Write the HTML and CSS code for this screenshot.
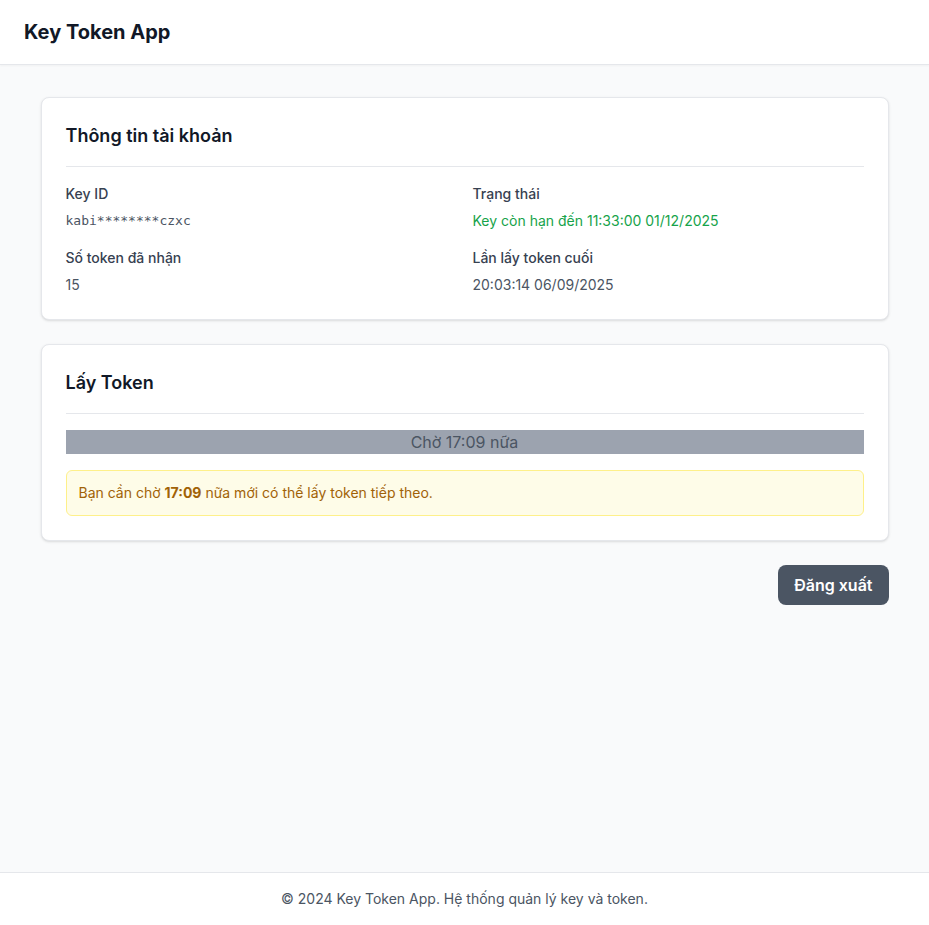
FILE: index.html
```html
<!DOCTYPE html>
<html lang="vi">
<head>
<meta charset="utf-8">
<title>Key Token App</title>
<link rel="stylesheet" href="styles.css">
</head>
<body>
<div class="page">
  <header class="header">
    <h1 class="brand">Key Token App</h1>
  </header>
  <main class="main">
    <div class="container">
      <section class="card">
        <h2 class="card-title">Thông tin tài khoản</h2>
        <div class="info-grid">
          <div class="field">
            <div class="label">Key ID</div>
            <div class="value mono">kabi********czxc</div>
          </div>
          <div class="field">
            <div class="label">Trạng thái</div>
            <div class="value green">Key còn hạn đến 11:33:00 01/12/2025</div>
          </div>
          <div class="field">
            <div class="label">Số token đã nhận</div>
            <div class="value">15</div>
          </div>
          <div class="field">
            <div class="label">Lần lấy token cuối</div>
            <div class="value">20:03:14 06/09/2025</div>
          </div>
        </div>
      </section>
      <section class="card">
        <h2 class="card-title">Lấy Token</h2>
        <div class="card-body">
          <div class="wait-bar">Chờ 17:09 nữa</div>
          <div class="alert">Bạn cần chờ <strong>17:09</strong> nữa mới có thể lấy token tiếp theo.</div>
        </div>
      </section>
      <div class="actions">
        <button class="btn-logout" type="button">Đăng xuất</button>
      </div>
    </div>
  </main>
  <footer class="footer">© 2024 Key Token App. Hệ thống quản lý key và token.</footer>
</div>
</body>
</html>
```
FILE: styles.css
```css
* { box-sizing: border-box; }
html, body { margin: 0; padding: 0; }
body {
  font-family: Inter, "Noto Sans", "Liberation Sans", sans-serif;
  background: #f9fafb;
  color: #111827;
}
.page {
  min-height: 100vh;
  display: flex;
  flex-direction: column;
}
.header {
  background: #fff;
  border-bottom: 1px solid #e5e7eb;
  box-shadow: 0 1px 2px rgba(0,0,0,0.04);
  padding: 18px 24px;
}
.brand {
  margin: 0;
  font-size: 20px;
  line-height: 28px;
  font-weight: 700;
  color: #111827;
}
.main {
  flex: 1;
  padding: 32px 0;
}
.container {
  max-width: 896px;
  margin: 0 auto;
  padding: 0 24px;
}
.card {
  background: #fff;
  border: 1px solid #e5e7eb;
  border-radius: 8px;
  box-shadow: 0 1px 3px rgba(0,0,0,0.1), 0 1px 2px -1px rgba(0,0,0,0.1);
  padding: 24px;
  margin-bottom: 24px;
}
.card-title {
  margin: 0;
  font-size: 18px;
  line-height: 28px;
  font-weight: 600;
  color: #111827;
  padding-bottom: 16px;
  border-bottom: 1px solid #e5e7eb;
}
.info-grid {
  margin-top: 17px;
  display: grid;
  grid-template-columns: 1fr 1fr;
  gap: 17px 16px;
}
.label {
  font-size: 14px;
  line-height: 20px;
  font-weight: 500;
  color: #374151;
}
.value {
  margin-top: 7px;
  font-size: 14px;
  line-height: 20px;
  color: #4b5563;
}
.value.mono {
  font-family: "DejaVu Sans Mono", "Liberation Mono", monospace;
  font-size: 13px;
}
.value.green { color: #16a34a; }
.card-body { margin-top: 16px; }
.wait-bar {
  background: #9ca3af;
  color: #4b5563;
  text-align: center;
  font-size: 16px;
  line-height: 24px;
}
.alert {
  margin-top: 16px;
  background: #fefce8;
  border: 1px solid #fef08a;
  border-radius: 6px;
  padding: 12px;
  font-size: 14px;
  line-height: 20px;
  color: #a16207;
}
.alert strong { font-weight: 700; }
.actions {
  display: flex;
  justify-content: flex-end;
}
.btn-logout {
  font-family: inherit;
  background: #4b5563;
  color: #fff;
  border: 0;
  border-radius: 8px;
  padding: 8px 16px;
  font-size: 16px;
  line-height: 24px;
  font-weight: 600;
  cursor: pointer;
}
.footer {
  background: #fff;
  border-top: 1px solid #e5e7eb;
  padding: 16px;
  text-align: center;
  font-size: 14px;
  line-height: 20px;
  color: #4b5563;
}
```
